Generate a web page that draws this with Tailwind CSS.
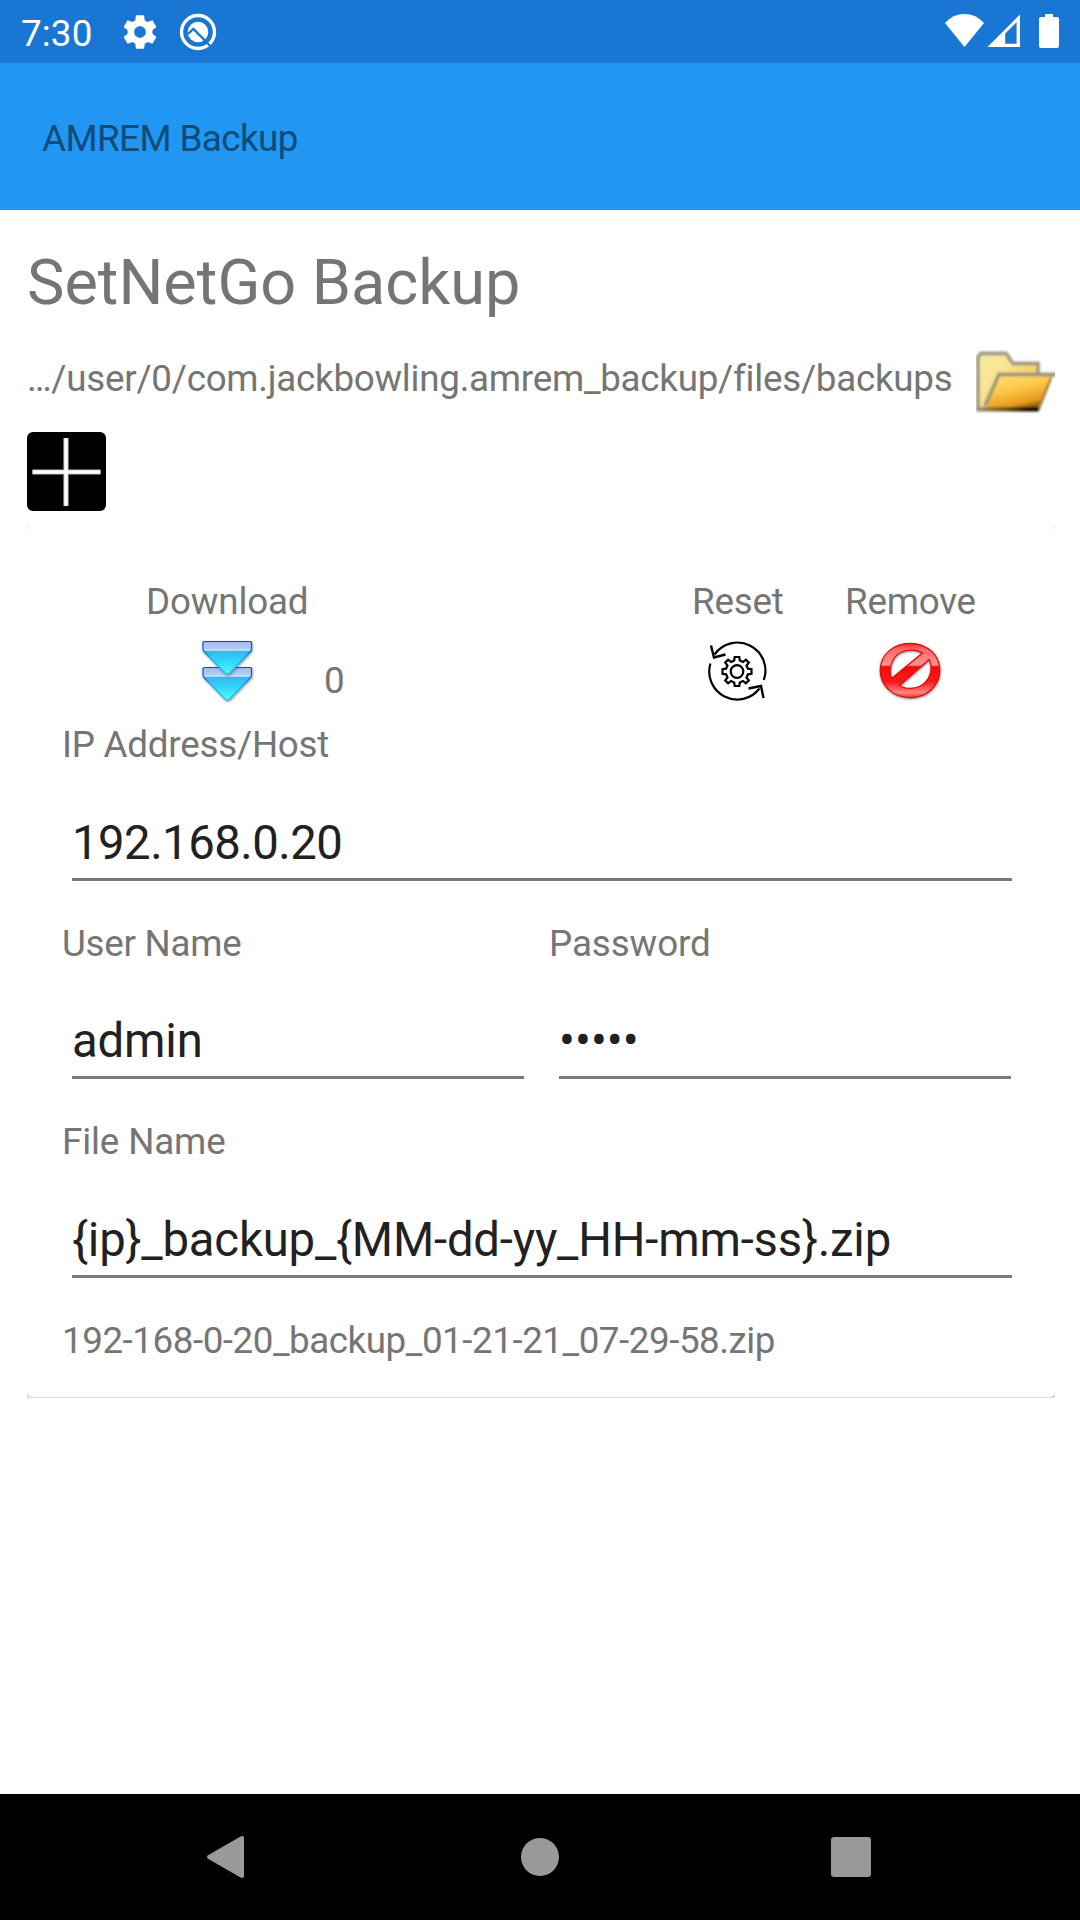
<!DOCTYPE html>
<html lang="en">
<head>
<meta charset="utf-8">
<title>AMREM Backup</title>
<script src="https://cdn.jsdelivr.net/npm/@tailwindcss/browser@4"></script>
</head>
<body class="bg-white">
<div class="flex h-[1920px] w-[1080px] flex-col overflow-hidden bg-white font-[Roboto,sans-serif] text-[36.75px] leading-[43px] text-[#757575]">

  <!-- Status bar -->
  <div class="flex h-[63px] shrink-0 items-start bg-[#1976d2] pl-[21px] text-white">
    <span class="mt-3 w-[99px] tracking-[0.15px]">7:30</span>
    <svg class="mt-[11.5px] h-10 w-10" viewBox="0 0 24 24" fill="currentColor"><path d="M19.43 12.98c.04-.32.07-.64.07-.98s-.03-.66-.07-.98l2.11-1.65c.19-.15.24-.42.12-.64l-2-3.46c-.12-.22-.39-.3-.61-.22l-2.49 1c-.52-.4-1.08-.73-1.69-.98l-.38-2.65C14.46 2.18 14.25 2 14 2h-4c-.25 0-.46.18-.49.42l-.38 2.65c-.61.25-1.17.59-1.69.98l-2.49-1c-.23-.09-.49 0-.61.22l-2 3.46c-.13.22-.07.49.12.64l2.11 1.65c-.04.32-.07.65-.07.98s.03.66.07.98l-2.11 1.65c-.19.15-.24.42-.12.64l2 3.46c.12.22.39.3.61.22l2.49-1c.52.4 1.08.73 1.69.98l.38 2.65c.03.24.24.42.49.42h4c.25 0 .46-.18.49-.42l.38-2.65c.61-.25 1.17-.59 1.69-.98l2.49 1c.23.09.49 0 .61-.22l2-3.46c.12-.22.07-.49-.12-.64l-2.11-1.65zM12 15.500c-1.93 0-3.500-1.57-3.500-3.500s1.57-3.500 3.500-3.500 3.500 1.57 3.500 3.500-1.57 3.500-3.500 3.500z"/></svg>
    <svg class="mt-[11.5px] ml-[18px] h-10 w-10" viewBox="0 0 40 40" fill="none">
      <circle cx="20" cy="20" r="16.500" stroke="white" stroke-width="3.400"/>
      <circle cx="20" cy="20" r="10.300" fill="white"/>
      <path d="M10 22L15.300 17L28.500 30" stroke="#1976d2" stroke-width="2.400"/>
      <path d="M26.500 28L34 36" stroke="#1976d2" stroke-width="2.200"/>
    </svg>
    <svg class="ml-[727px] h-[63px] w-[118px]" viewBox="945 0 118 63" fill="white">
      <path d="M945 23Q953 14 964.500 14T984 23L964.500 47Z"/>
      <path fill-rule="evenodd" d="M987.500 47L1020 14.500V47ZM1005.200 33.500V43.800H1016.600V22.300Z"/>
      <path d="M1045 17V14h8v3h4a2 2 0 0 1 2 2v27a2 2 0 0 1-2 2h-16a2 2 0 0 1-2-2V19a2 2 0 0 1 2-2z"/>
    </svg>
  </div>

  <!-- App bar -->
  <div class="flex h-[147px] shrink-0 items-start bg-[#2196f3] px-[42px] pt-[54px] tracking-[-0.55px] text-[#114b79]">AMREM Backup</div>

  <!-- Content -->
  <div class="flex grow flex-col pr-[25px] pl-[27px]">
    <h1 class="mt-9 h-24 text-[63px] leading-[74px]">SetNetGo Backup</h1>
    <div class="flex h-[79px] items-start justify-between">
      <span class="mt-[15px] tracking-[-0.25px] whitespace-nowrap">…/user/0/com.jackbowling.amrem_backup/files/backups</span>
      <svg class="h-[79px] w-[79px]" viewBox="976 342 79 79">
        <defs>
          <linearGradient id="back" x1="0" y1="0" x2="1" y2=".7"><stop offset="0" stop-color="#f6eda0"/><stop offset=".35" stop-color="#f9e493"/><stop offset="1" stop-color="#fbbf35"/></linearGradient>
          <linearGradient id="front" x1=".15" y1="0" x2=".6" y2="1"><stop offset="0" stop-color="#ffe07c"/><stop offset=".45" stop-color="#fdc84a"/><stop offset=".85" stop-color="#e79a1c"/><stop offset="1" stop-color="#8a5a0c"/></linearGradient>
          <linearGradient id="base" gradientUnits="userSpaceOnUse" x1="976" y1="0" x2="1040" y2="0"><stop offset="0" stop-color="#a09a80"/><stop offset=".45" stop-color="#705810"/><stop offset=".8" stop-color="#1b1002"/></linearGradient>
          <filter id="soft" x="-.1" y="-.1" width="1.2" height="1.2"><feGaussianBlur stdDeviation="1"/></filter>
        </defs>
        <g filter="url(#soft)">
          <path d="M978 409V357L981 353.500H1006L1013 363.500H1038V378H1050L1038 409Z" fill="url(#back)" stroke="#a39c86" stroke-width="3.800"/>
          <path d="M987 408L1000 374.500H1052L1038 408Z" fill="url(#front)"/>
          <path d="M985 406L999 374.500H1058" fill="none" stroke="#a29879" stroke-width="4"/>
          <path d="M1051 378L1039 408" stroke="#a8833c" stroke-width="2.500"/>
          <path d="M976 409.200H1039" stroke="url(#base)" stroke-width="4.500"/>
        </g>
      </svg>
    </div>
    <svg class="mt-[11px] h-[79px] w-[79px] rounded-[6px] bg-black" viewBox="0 0 79 79"><path d="M5.500 40H73.500M39 6V74" stroke="#888" stroke-width="5.600"/><path d="M5.500 40H73.500M39 6V74" stroke="white" stroke-width="3.600"/></svg>

    <!-- Backup card -->
    <div class="mt-[15px] h-[872px] bg-linear-to-b from-[#f3f3f3] to-[#dcdcdc] pb-px">
      <div class="flex h-full flex-col rounded-[6px] bg-white pr-[35px] pl-[35px]">
        <div class="flex h-[197px] items-start pt-[54px]">
          <div class="ml-[84px] flex w-[178px] flex-col">
            <span class="tracking-[-0.15px]">Download</span>
            <svg class="mt-4 ml-[54px] h-[64px] w-[56px]" viewBox="200 639 56 64">
              <defs>
                <linearGradient id="arrow" x1="0" y1="0" x2="0" y2="1"><stop offset="0" stop-color="#a3b8ee"/><stop offset=".25" stop-color="#b4d0f6"/><stop offset=".3" stop-color="#35b4f2"/><stop offset=".65" stop-color="#32dcfb"/><stop offset="1" stop-color="#55fbff"/></linearGradient>
                <linearGradient id="edge" x1="0" y1="0" x2="0" y2="1"><stop offset="0" stop-color="#1c46c4"/><stop offset=".3" stop-color="#1c62d8"/><stop offset=".5" stop-color="#1ea6ee"/><stop offset="1" stop-color="#25c8e8"/></linearGradient>
                <filter id="shade" x="-.2" y="-.2" width="1.4" height="1.4"><feDropShadow dx=".6" dy="1.200" stdDeviation=".8" flood-color="#345" flood-opacity=".6"/></filter>
                <g id="chevron" filter="url(#shade)">
                  <path d="M204.500 641.500H250.500Q251.500 641.500 251.500 642.500V648.500Q251.500 650.500 250 652L230 672.500Q227.300 675.500 224.600 672.500L204.500 652Q203 650.500 203 648.500V642.500Q203 641.500 204.500 641.500Z" fill="url(#arrow)" stroke="url(#edge)" stroke-width="1.200"/>
                  <path d="M204.500 650H250" stroke="#bce6ff" stroke-width="1.600"/>
                </g>
              </defs>
              <use href="#chevron" y="26"/>
              <use href="#chevron"/>
            </svg>
          </div>
          <span class="mt-[79px] w-[368px]">0</span>
          <div class="flex w-[153px] flex-col">
            <span class="tracking-[-0.24px]">Reset</span>
            <svg class="mt-4 ml-[13px] h-[64px] w-[64px]" viewBox="-32 -32.500 64 64" fill="none" stroke="black">
              <path d="M-22.500 -17A28 28 0 0 1 26.800 8.500M-26.600 -8A28 28 0 0 0 22.500 17" stroke-width="2.200"/>
              <path d="M-26 -26L-23 -14L-11.500 -17M11.500 17L24 14.500L26.500 26.500" stroke-width="2.400"/>
              <circle r="6.300" stroke-width="2.200"/>
              <path d="M-2.300 -14.500H2.300L2.800 -10.900L6 -9.500L8.900 -11.800L11.800 -8.900L9.500 -6L10.900 -2.800L14.500 -2.300V2.300L10.900 2.800L9.500 6L11.800 8.900L8.900 11.800L6 9.500L2.800 10.900L2.300 14.500H-2.300L-2.800 10.900L-6 9.500L-8.900 11.800L-11.800 8.900L-9.500 6L-10.900 2.800L-14.500 2.300V-2.300L-10.900 -2.800L-9.500 -6L-11.800 -8.900L-8.900 -11.800L-6 -9.500L-2.800 -10.900Z" stroke-width="2.200"/>
            </svg>
          </div>
          <div class="flex flex-col">
            <span class="tracking-[-0.2px]">Remove</span>
            <svg class="mt-4 ml-[32px] h-[64px] w-[66px]" viewBox="877 639 66 64">
              <defs>
                <linearGradient id="red" gradientUnits="userSpaceOnUse" x1="0" y1="643" x2="0" y2="698"><stop offset="0" stop-color="#ee2222"/><stop offset=".12" stop-color="#ff6a6a"/><stop offset=".4" stop-color="#ff9090"/><stop offset=".43" stop-color="#f41010"/><stop offset=".7" stop-color="#fb1414"/><stop offset=".9" stop-color="#ff8484"/><stop offset="1" stop-color="#e83030"/></linearGradient>
                <filter id="drop" x="-.2" y="-.2" width="1.4" height="1.4"><feDropShadow dx=".3" dy="1" stdDeviation=".8" flood-color="#444" flood-opacity=".7"/></filter>
              </defs>
              <g filter="url(#drop)">
                <path fill="url(#red)" stroke="#dc0808" stroke-width="1.200" fill-rule="evenodd" d="M910 643.300C927 643.300 939.800 655 939.800 670.300S927 697.600 910 697.600S880.200 685.500 880.200 670.300S893 643.300 910 643.300ZM891.500 678.500L922.500 653C918 650 910 649 903 651.500C893 655 887.500 668 891.500 678.500ZM899.500 685.500C905 689.500 915 689.500 922 685C931 679 933 668 929.200 659.500Z"/>
              </g>
            </svg>
          </div>
        </div>

        <span class="tracking-[-0.23px]">IP Address/Host</span>
        <div class="mt-[49px] mr-[8px] ml-[10px] h-[66px] border-b-3 border-[#7b7b7b] text-[47.25px] leading-[56px] tracking-[-0.5px] text-[#212121]">192.168.0.20</div>

        <div class="mt-[41px] flex gap-[35px]">
          <div class="flex w-[452px] shrink-0 flex-col">
            <span class="tracking-[-0.27px]">User Name</span>
            <div class="mt-[48px] ml-[10px] h-[66px] w-[452px] border-b-3 border-[#7b7b7b] text-[47.25px] leading-[56px] tracking-[-0.15px] text-[#212121]">admin</div>
          </div>
          <div class="flex flex-col">
            <span class="tracking-[-0.08px]">Password</span>
            <div class="mt-[48px] ml-[10px] h-[66px] w-[452px] border-b-3 border-[#7b7b7b] text-[47.25px] leading-[56px] text-[#212121]">•••••</div>
          </div>
        </div>

        <span class="mt-[41px] tracking-[-0.13px]">File Name</span>
        <div class="mt-[49px] mr-[8px] ml-[10px] h-[66px] border-b-3 border-[#7b7b7b] text-[47.25px] leading-[56px] tracking-[-0.175px] text-[#212121]">{ip}_backup_{MM-dd-yy_HH-mm-ss}.zip</div>
        <span class="mt-[41px] tracking-[-0.45px]">192-168-0-20_backup_01-21-21_07-29-58.zip</span>
      </div>
    </div>
  </div>

  <!-- Navigation bar -->
  <div class="flex h-[126px] shrink-0 items-center bg-black pl-[206px]">
    <svg class="h-[44px] w-[39px]" viewBox="0 0 39 44"><path d="M3 22L36 3V41Z" fill="#999" stroke="#999" stroke-width="4" stroke-linejoin="round"/></svg>
    <div class="ml-[276px] h-[38px] w-[38px] rounded-full bg-[#999]"></div>
    <div class="ml-[272px] h-10 w-10 rounded-[3px] bg-[#999]"></div>
  </div>
</div>
</body>
</html>
